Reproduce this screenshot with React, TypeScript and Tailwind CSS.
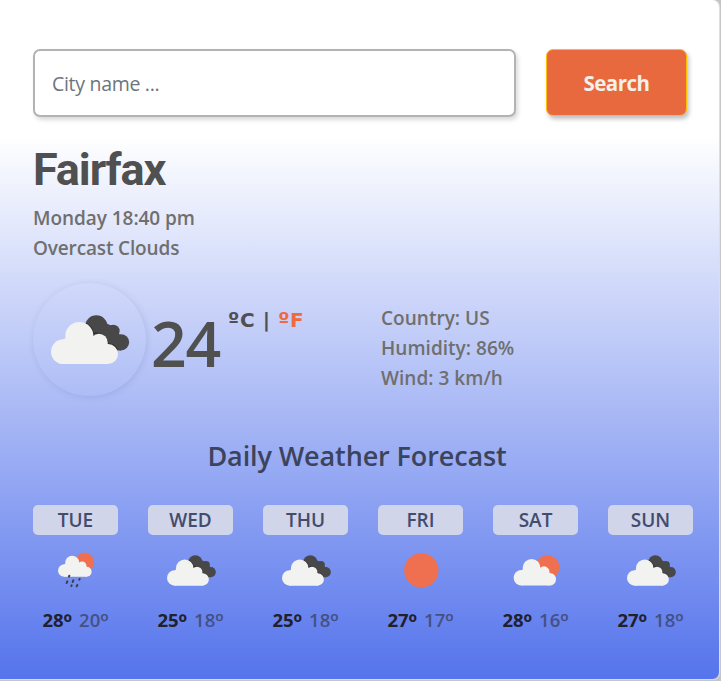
import React from "react";

const sans = "font-['Open_Sans','Noto_Sans',sans-serif]";

function WhiteCloud() {
  return (
    <g fill="#f2f2f1">
      <circle cx="130" cy="246" r="37" />
      <circle cx="178" cy="199" r="42" />
      <circle cx="237" cy="218" r="26" />
      <circle cx="264" cy="253" r="30" />
      <path d="M130 209 L150 200 L240 200 L264 223 L264 283 L130 283 Z" />
    </g>
  );
}

function Clouds() {
  return (
    <g>
      <g fill="#484849">
        <circle cx="229" cy="171" r="34" />
        <circle cx="280" cy="184" r="19" />
        <circle cx="303" cy="218" r="24.5" />
        <path d="M229 150 L280 170 L303 200 L303 242.500 L260 242 L210 190 Z" />
      </g>
      <g fill="none" stroke="#303032" strokeWidth="4">
        <path d="M198 161 A42 42 0 0 1 220 191 Q256 187 264 222 Q285 224 292 240" />
      </g>
      <WhiteCloud />
    </g>
  );
}

type Kind = "rain" | "clouds" | "sun" | "partly";

function Icon({ kind }: { kind: Kind }) {
  return (
    <svg width="85" height="43" viewBox="39 159 255 129" className="block">
      {kind === "clouds" && (
        <g transform="translate(96 180) scale(.625) translate(-93 -136)">
          <Clouds />
        </g>
      )}
      {kind === "sun" && <circle cx="169" cy="226" r="51.500" fill="#ee7050" />}
      {kind === "partly" && (
        <g>
          <circle cx="202" cy="217" r="36" fill="#ee7050" />
          <g transform="translate(101 192) scale(.632) translate(-93 -157)">
            <WhiteCloud />
          </g>
        </g>
      )}
      {kind === "rain" && (
        <g>
          <circle cx="194" cy="201" r="28.500" fill="#ee7050" />
          <g transform="translate(114 182) scale(.502) translate(-93 -157)">
            <WhiteCloud />
          </g>
          <g stroke="#3b3d4a" strokeWidth="6" strokeLinecap="round">
            <path d="M148 242l-1 3M142 259l-2 5M160 256l-2 5M179 252l-1 2M155 271l-1 2M172 270l-2 4" />
          </g>
        </g>
      )}
    </svg>
  );
}

const days: { name: string; kind: Kind; hi: string; lo: string }[] = [
  { name: "TUE", kind: "rain", hi: "28", lo: "20" },
  { name: "WED", kind: "clouds", hi: "25", lo: "18" },
  { name: "THU", kind: "clouds", hi: "25", lo: "18" },
  { name: "FRI", kind: "sun", hi: "27", lo: "17" },
  { name: "SAT", kind: "partly", hi: "28", lo: "16" },
  { name: "SUN", kind: "clouds", hi: "27", lo: "18" },
];

function Degree() {
  return <span className="inline-block translate-y-[3px] text-[22px] leading-none">º</span>;
}

export default function App() {
  return (
    <div className={`h-[681px] w-[721px] overflow-hidden bg-[#c4c4c4] ${sans}`}>
      <main className="h-[679px] w-[720px] rounded-r-[7px] border-r border-[#dedede] bg-[linear-gradient(180deg,#fff_20%,#5574ec_100%)] pl-[33px] pt-[49px] shadow-[0_1px_1px_#dedede]">
        <form className="flex h-[68px] items-start gap-[30px]" onSubmit={(e) => e.preventDefault()}>
          <input
            placeholder="City name ..."
            className="h-[68px] w-[483px] rounded-[7px] border-2 border-[#b3b3b3] bg-white px-[17px] pt-px text-[19.5px] tracking-[-0.3px] shadow-[2px_3px_4px_rgba(0,0,0,0.15)] outline-none placeholder:text-[#6c757d]"
          />
          <button className="h-[67px] w-[141px] rounded-[7px] border border-[#ffc107] bg-[#e9693f] pt-[2px] text-[20.5px] font-bold tracking-[-0.5px] text-[#f2f0e9] shadow-[2px_3px_4px_rgba(0,0,0,0.25)]">
            Search
          </button>
        </form>

        <h1 className="mt-[28px] h-[50px] whitespace-nowrap font-['Roboto','Liberation_Sans',sans-serif] text-[45px] font-bold leading-[50px] tracking-[-1.1px] text-[#505050]">
          Fairfax
        </h1>
        <div className="mt-[8px] whitespace-nowrap text-[19px] font-semibold leading-[30px] tracking-[-0.05px] text-[#6f6f6f]">
          <p>Monday 18:40 pm</p>
          <p className="tracking-[-0.15px]">Overcast Clouds</p>
        </div>

        <section className="mt-[20px] flex h-[113px]">
          <div className="flex h-[113px] w-[113px] shrink-0 items-center justify-center rounded-full shadow-[1px_1px_6px_rgba(60,70,140,0.15)]">
            <svg width="80" height="52" viewBox="90 133 240 156" className="block">
              <Clouds />
            </svg>
          </div>
          <div className="ml-[5px] flex w-[230px] whitespace-nowrap text-[#505050]">
            <span className="mt-[24px] w-[77px] text-[62.500px] font-semibold leading-[72px] tracking-[-1.2px]">24</span>
            <span className="mt-[22px] font-['DejaVu_Sans',sans-serif] text-[20px] font-bold leading-[30px] tracking-[0.6px]">
              ºC | <span className="text-[#ef6a3e]">ºF</span>
            </span>
          </div>
          <div className="mt-[20px] whitespace-nowrap text-[19px] font-semibold leading-[30px] tracking-[0.03px] text-[#6f6f6f]">
            <p>Country: US</p>
            <p>Humidity: 86%</p>
            <p>Wind: 3 km/h</p>
          </div>
        </section>

        <h2 className="mt-[41px] w-[648px] whitespace-nowrap text-center text-[27px] font-semibold leading-[38px] tracking-[-0.12px] text-[#3c435c]">
          Daily Weather Forecast
        </h2>
        <section className="mt-[30px] flex gap-[30px]">
          {days.map((d) => (
            <div key={d.name} className="w-[85px] text-center">
              <h3 className="h-[30px] rounded-[5px] bg-[#d0d5ea] text-[19px] font-semibold leading-[30px] text-[#434c6d]">
                {d.name}
              </h3>
              <div className="mt-[13px]">
                <Icon kind={d.kind} />
              </div>
              <p className="mt-[14px] flex h-[30px] justify-center gap-[7px] whitespace-nowrap text-[18.500px] leading-[30px]">
                <span className="font-bold text-[#20212b]">{d.hi}<Degree /></span>
                <span className="font-semibold text-[#445182]">{d.lo}<Degree /></span>
              </p>
            </div>
          ))}
        </section>
      </main>
    </div>
  );
}
